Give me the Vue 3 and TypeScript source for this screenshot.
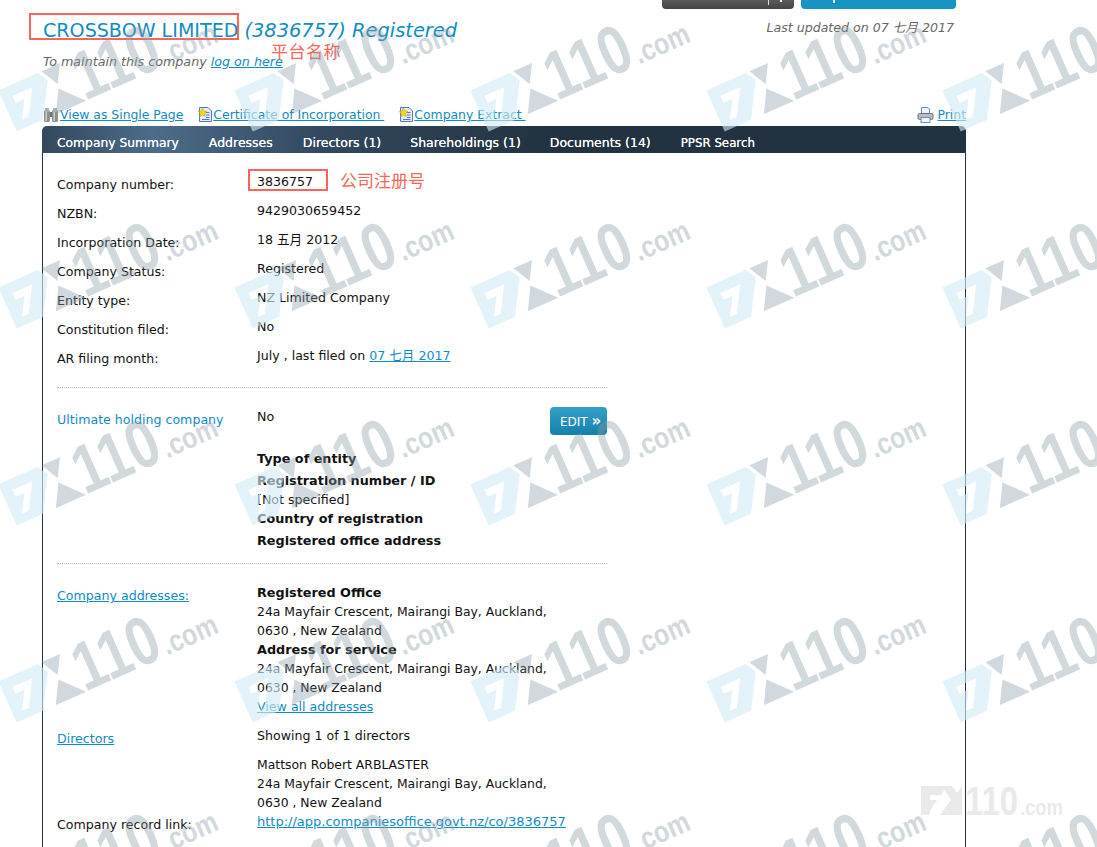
<template>
  <div class="page">
    <div class="top-actions">
      <div class="btn-dark"><span class="btn-sep"></span><span class="btn-tick"></span></div>
      <div class="btn-blue"><span class="btn-tick blue-tick"></span></div>
    </div>

    <header class="head">
      <div class="head-left">
        <h1 class="title">
          <span class="name">CROSSBOW LIMITED</span><em>(3836757) Registered</em>
        </h1>
        <p class="maintain">To maintain this company <a href="#">log on here</a></p>
      </div>
      <p class="updated">Last updated on 07 七月 2017</p>
    </header>

    <div class="links">
      <a href="#" class="tool">
        <svg class="tool-icon" width="17" height="16" viewBox="0 0 17 16">
          <rect x="1" y="3" width="6" height="12" rx="1.5" fill="#8b918e" />
          <rect x="9" y="3" width="6" height="12" rx="1.5" fill="#8b918e" />
          <rect x="2" y="1" width="4" height="4" fill="#a9aeaa" />
          <rect x="10" y="1" width="4" height="4" fill="#a9aeaa" />
          <rect x="7" y="5" width="2" height="5" fill="#6d7370" />
          <rect x="2.5" y="5" width="1.5" height="9" fill="#c9cdca" />
          <rect x="10.5" y="5" width="1.5" height="9" fill="#c9cdca" />
        </svg><span>View as Single Page</span>
      </a>
      <a v-for="doc in docs" :key="doc" href="#" class="tool doc-link">
        <svg class="tool-icon" width="16" height="16" viewBox="0 0 16 16">
          <path d="M2.5 .5H11L14.5 4V14.500H2.500Z" fill="#e6edf9" stroke="#5577c2" />
          <path d="M8 5.500H12.500M9 8H12.500M9 10.500H12.500M5 12.500H12.500" stroke="#5577c2" />
          <path d="M5.500 1 7 4 10 4.400 7.800 6.500 8.300 9.500 5.500 8 2.700 9.500 3.200 6.500 1 4.400 4 4Z" fill="#f5d90f" stroke="#b79a12" stroke-width=".5" />
        </svg><span>{{ doc }}&nbsp;</span>
      </a>
      <a href="#" class="print">
        <svg width="17" height="16" viewBox="0 0 17 16">
          <path d="M4.500 .5H11L12.500 2V7H4.500Z" fill="#eef3fb" stroke="#6c8fc0" />
          <rect x="1" y="6.500" width="15" height="6" rx="1.500" fill="#b9bdc2" stroke="#6d7278" />
          <rect x="4" y="10.500" width="9" height="5" fill="#f4f6f9" stroke="#6c8fc0" />
        </svg>
        <span>Print</span>
      </a>
    </div>

    <nav class="tabs">
      <a v-for="tab in tabs" :key="tab" href="#">{{ tab }}</a>
    </nav>

    <main class="panel">
      <section class="facts">
        <div v-for="row in facts" :key="row.label" class="row fact">
          <span class="label">{{ row.label }}</span>
          <span class="value">
            {{ row.value }}<a v-if="row.link" href="#" class="link">{{ row.link }}</a>
          </span>
        </div>
      </section>

      <section class="holding">
        <div class="row">
          <span class="label label-link">Ultimate holding company</span>
          <span class="value">No</span>
          <a href="#" class="edit"><span>EDIT</span> <b>»</b></a>
        </div>
        <div class="row entity">
          <span class="label"></span>
          <div class="value">
            <strong class="s1">Type of entity</strong>
            <strong class="s2">Registration number / ID</strong>
            <span class="l">[Not specified]</span>
            <strong class="l">Country of registration</strong>
            <strong class="s3">Registered office address</strong>
          </div>
        </div>
      </section>

      <section class="addresses">
        <div class="row">
          <a href="#" class="label link">Company addresses:</a>
          <div class="value">
            <strong class="l">Registered Office</strong>
            <span class="l addr">24a Mayfair Crescent, Mairangi Bay, Auckland,</span>
            <span class="l addr">0630 , New Zealand</span>
            <strong class="l">Address for service</strong>
            <span class="l addr">24a Mayfair Crescent, Mairangi Bay, Auckland,</span>
            <span class="l addr">0630 , New Zealand</span>
            <a href="#" class="l link view-all">View all addresses</a>
          </div>
        </div>
        <div class="row directors">
          <a href="#" class="label link">Directors</a>
          <div class="value">
            <span class="l showing">Showing 1 of 1 directors</span>
            <span class="l addr">Mattson Robert ARBLASTER</span>
            <span class="l addr">24a Mayfair Crescent, Mairangi Bay, Auckland,</span>
            <span class="l addr">0630 , New Zealand</span>
          </div>
        </div>
        <div class="row">
          <span class="label">Company record link:</span>
          <a href="#" class="value link record">http://app.companiesoffice.govt.nz/co/3836757</a>
        </div>
      </section>
    </main>

    <!-- annotations painted on the screenshot -->
    <div class="mark box-name"></div>
    <div class="note note-name">平台名称</div>
    <div class="mark box-number"></div>
    <div class="note note-number">公司注册号</div>

    <!-- FX110 watermark -->
    <svg class="watermark" width="1097" height="847" viewBox="0 0 1097 847">
      <g v-for="(m, i) in marks" :key="i" :transform="`translate(${m.x} ${m.y}) rotate(-24) scale(1.07)`">
        <path
          fill-rule="evenodd"
          d="M0 -22H40L46 -12 27 20H0ZM10 -12H30L16 12H9L19 -5H10Z"
          fill="#d4ebf7"
          opacity=".62"
        />
        <path d="M44 -22H63L53 -5ZM52 -1 71 20H40Z" fill="#8a9ca8" opacity=".38" />
        <text x="70" y="20" class="wm-num" textLength="82" lengthAdjust="spacingAndGlyphs">110</text>
        <text x="154" y="20" class="wm-com" textLength="54" lengthAdjust="spacingAndGlyphs">.com</text>
      </g>
      <g transform="translate(921 786)">
        <path fill-rule="evenodd" d="M0 0H26L20 9H9V14H16L10 23 8 29H0Z" fill="#eaeaea" />
        <path d="M19 29 30 14 21 0H31L36 7 41 0V29H33Z" fill="#eaeaea" />
        <text x="44" y="29" class="wm-corner" textLength="53" lengthAdjust="spacingAndGlyphs">110</text>
        <text x="99" y="29" class="wm-corner-com" textLength="43" lengthAdjust="spacingAndGlyphs">.com</text>
      </g>
    </svg>
  </div>
</template>

<script setup lang="ts">
interface Fact {
  label: string;
  value: string;
  link?: string;
}

const tabs = ['Company Summary', 'Addresses', 'Directors (1)', 'Shareholdings (1)', 'Documents (14)', 'PPSR Search'];
const docs = ['Certificate of Incorporation', 'Company Extract'];

const facts: Fact[] = [
  { label: 'Company number:', value: '3836757' },
  { label: 'NZBN:', value: '9429030659452' },
  { label: 'Incorporation Date:', value: '18 五月 2012' },
  { label: 'Company Status:', value: 'Registered' },
  { label: 'Entity type:', value: 'NZ Limited Company' },
  { label: 'Constitution filed:', value: 'No' },
  { label: 'AR filing month:', value: 'July , last filed on ', link: '07 七月 2017' },
];

const marks: { x: number; y: number }[] = [];
for (let r = 0; r < 5; r++) {
  for (let c = 0; c < 5; c++) {
    marks.push({ x: c * 236 + 8, y: r * 197 + 112 });
  }
}
</script>

<style>
html, body { margin: 0; background: #fff; }
</style>

<style scoped>
.page {
  position: relative;
  height: 847px;
  overflow: hidden;
  font-family: "DejaVu Sans", "Noto Sans CJK SC", sans-serif;
  font-size: 12.6px;
  color: #111;
}
a { color: #0f8cc6; }
.top-actions { display: flex; gap: 7px; height: 9px; padding-left: 662px; }
.btn-dark {
  width: 132px;
  background: linear-gradient(#5a5a5a, #444);
  border-radius: 0 0 4px 4px;
  position: relative;
}
.btn-sep { position: absolute; left: 106px; top: 0; width: 1px; height: 5px; background: #ddd; }
.btn-tick { position: absolute; left: 118px; top: 0; width: 2px; height: 2px; background: #eee; }
.btn-blue { width: 155px; background: #1793c4; border-radius: 0 0 4px 4px; position: relative; }
.blue-tick { left: 32px; height: 3px; }

.head { display: flex; justify-content: space-between; padding: 10px 143px 0 43px; height: 80px; }
.title { margin: 0; font-size: 19.1px; font-weight: 400; line-height: 24px; color: #0f8cc6; white-space: nowrap; }
.title em { font-size: 19.4px; margin-left: 6px; }
.maintain { margin: 11px 0 0; font-style: italic; font-size: 12.7px; color: #666; }
.updated { margin: -2px 0 0; font-style: italic; color: #666; }

.links { display: flex; align-items: center; height: 27px; padding: 4px 0 0 43px; width: 966px; box-sizing: border-box; font-size: 12.4px; }
.tool { display: flex; align-items: center; white-space: nowrap; }
.tool-icon { flex: none; text-decoration: none; }
.doc-link { margin-left: 14px; }
.print { margin-left: auto; display: flex; align-items: center; gap: 3px; }

.tabs {
  display: flex;
  gap: 30px;
  width: 924px;
  height: 27px;
  margin-left: 42px;
  padding: 6px 0 0 15px;
  box-sizing: border-box;
  align-items: center;
  border-radius: 5px 5px 0 0;
  font-size: 12.5px;
  background: linear-gradient(90deg, #33485c 0, #4d6c8a 12%, #33495f 30%, #233240 55%, #233240 100%);
}
.tabs a { color: #fff; text-decoration: none; text-shadow: 0 0 .6px #fff; }
.tabs a:first-child { font-size: 12.3px; }
.tabs a:nth-child(4) { margin-left: -1px; }
.tabs a:nth-child(5) { margin-left: -1px; }
.tabs a:last-child { font-size: 11.8px; }

.panel {
  width: 924px;
  height: 700px;
  margin-left: 42px;
  box-sizing: border-box;
  border-left: 1px solid #233240;
  border-right: 1px solid #233240;
  padding: 0 0 0 14px;
}
.row { display: flex; width: 550px; position: relative; }
.label { width: 200px; flex: none; padding-top: 3px; line-height: 19px; }
.label-link { color: #0f8cc6; }
.value { line-height: 19px; }
.value strong { font-size: 12.8px; }
.link { color: #0f8cc6; }
.l { display: block; }
.addr { font-size: 12.4px; }
.record { font-size: 13px; }
.fact { height: 29px; }
.facts { padding: 19px 0 12px; border-bottom: 1px dotted #bbb; width: 550px; }
.holding { padding: 19px 0 13px; border-bottom: 1px dotted #bbb; width: 550px; }
.edit {
  position: absolute;
  right: 0;
  top: 0;
  width: 57px;
  height: 28px;
  box-sizing: border-box;
  padding-left: 10px;
  line-height: 28px;
  color: #fff;
  text-decoration: none;
  border-radius: 4px;
  font-size: 12px;
  background: linear-gradient(#34a0c9, #1481ac);
}
.edit b { font-size: 15px; }
.entity { margin-top: 20px; }
.entity strong { display: block; }
.s1 { margin-bottom: 3px; }
.s2 { margin-bottom: 0; }
.s3 { margin-top: 3px; }
.addresses { padding-top: 19px; }
.view-all { margin-bottom: 10px; }
.showing { margin-bottom: 10px; }

.mark { position: absolute; border: 2px solid #f8655a; box-sizing: border-box; }
.box-name { left: 29px; top: 13px; width: 210px; height: 27px; }
.box-number { left: 248px; top: 169px; width: 80px; height: 22px; }
.note { position: absolute; color: #f8655a; font-size: 17px; line-height: 20px; font-family: "Noto Sans CJK SC", sans-serif; }
.note-name { left: 271px; top: 41px; letter-spacing: .5px; }
.note-number { left: 340px; top: 170px; }

.watermark { position: absolute; left: 0; top: 0; pointer-events: none; }
.wm-num { font: 700 64px "Liberation Sans", sans-serif; fill: #8a9ca8; opacity: .38; }
.wm-com { font: 700 28px "Liberation Sans", sans-serif; fill: #8a9ca8; opacity: .38; }
.wm-corner { font: 700 40px "Liberation Sans", sans-serif; fill: #eaeaea; }
.wm-corner-com { font: 700 22px "Liberation Sans", sans-serif; fill: #eaeaea; }
</style>
